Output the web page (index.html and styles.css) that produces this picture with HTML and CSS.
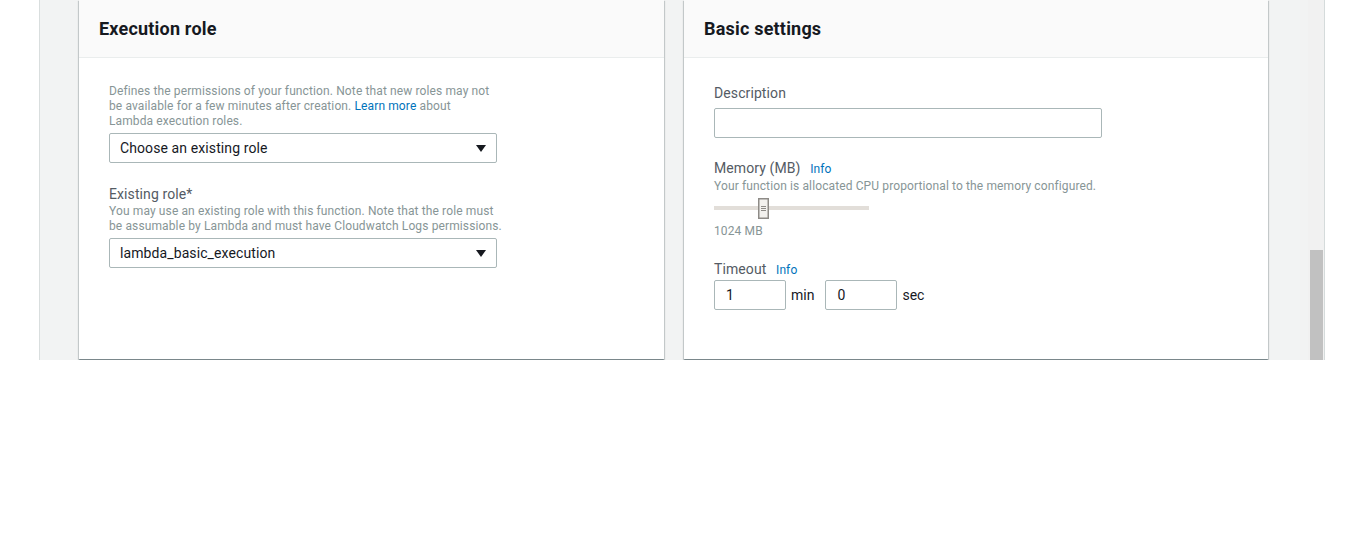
FILE: index.html
```html
<!DOCTYPE html>
<html>
<head>
<meta charset="utf-8">
<link rel="stylesheet" href="styles.css">
</head>
<body>
<div class="stage">
  <div class="content">
    <section class="panel">
      <div class="panel-head"><h2>Execution role</h2></div>
      <div class="panel-body">
        <p class="help first">Defines the permissions of your function. Note that new roles may not<br>be available for a few minutes after creation. <a href="#">Learn more</a> about<br>Lambda execution roles.</p>
        <div class="select"><span>Choose an existing role</span><i class="caret"></i></div>
        <div class="field role">
          <label class="label">Existing role*</label>
          <p class="help">You may use an existing role with this function. Note that the role must<br>be assumable by Lambda and must have Cloudwatch Logs permissions.</p>
          <div class="select"><span>lambda_basic_execution</span><i class="caret"></i></div>
        </div>
      </div>
    </section>
    <section class="panel">
      <div class="panel-head"><h2>Basic settings</h2></div>
      <div class="panel-body">
        <label class="label">Description</label>
        <div class="input wide"></div>
        <div class="field">
          <label class="label">Memory (MB) <a class="info" href="#">Info</a></label>
          <p class="help">Your function is allocated CPU proportional to the memory configured.</p>
          <div class="slider">
            <div class="track"></div>
            <svg class="thumb" width="11" height="21" viewBox="0 0 11 21"><rect x="0.75" y="0.75" width="9.5" height="19.5" fill="#f3f1ee" stroke="#8e8b87" stroke-width="1.5"/><path d="M3 8.5h5M3 10.5h5M3 12.5h5" stroke="#8e8b87" stroke-width="1"/></svg>
          </div>
          <p class="help">1024 MB</p>
        </div>
        <div class="field">
          <label class="label">Timeout <a class="info" href="#">Info</a></label>
          <div class="timeout">
            <div class="input short">1</div><span class="unit">min</span>
            <div class="input short">0</div><span class="unit">sec</span>
          </div>
        </div>
      </div>
    </section>
  </div>
  <div class="scrollbar"><div class="thumb-bar"></div></div>
</div>
</body>
</html>
```
FILE: styles.css
```css
html, body {
  margin: 0;
  padding: 0;
  background: #ffffff;
}
body {
  font-family: Roboto, "Open Sans", sans-serif;
  color: #16191f;
}
.stage {
  margin-left: 39px;
  width: 1284px;
  height: 360px;
  background: #f2f3f3;
  border-left: 1px solid #d9dede;
  border-right: 1px solid #d5dbdb;
  display: flex;
  overflow: hidden;
}
.content {
  flex: 1;
  padding-left: 39px;
  display: grid;
  grid-template-columns: 585px 584px;
  column-gap: 20px;
  align-items: start;
}
.panel {
  background: #ffffff;
  height: 359px;
  box-shadow: 0 1px 1px 0 rgba(0, 28, 36, 0.3), 1px 1px 1px 0 rgba(0, 28, 36, 0.15), -1px 1px 1px 0 rgba(0, 28, 36, 0.15);
}
.panel-head {
  height: 57px;
  background: #fafafa;
  border-bottom: 1px solid #eaeded;
  display: flex;
  align-items: center;
  padding: 0 20px;
}
.panel-head h2 {
  margin: 0;
  font-size: 18px;
  font-weight: 700;
  letter-spacing: 0.2px;
  color: #16191f;
}
.panel-body {
  padding: 25px 30px 0;
}
.help {
  margin: 0;
  font-size: 12px;
  line-height: 15px;
  letter-spacing: 0.12px;
  color: #879596;
}
.help.first {
  margin-top: 1px;
}
a {
  color: #0073bb;
  text-decoration: none;
}
.label {
  display: block;
  font-size: 14px;
  line-height: 20px;
  letter-spacing: 0.1px;
  color: #545b64;
}
.info {
  font-size: 12px;
  letter-spacing: 0.1px;
  margin-left: 6px;
}
.select {
  margin-top: 4px;
  height: 28px;
  border: 1px solid #aab7b8;
  border-radius: 2px;
  display: flex;
  align-items: center;
  justify-content: space-between;
  padding: 0 10px 0 10px;
  box-sizing: content-box;
  width: 366px;
  font-size: 14px;
  letter-spacing: 0.1px;
  color: #16191f;
}
.caret {
  width: 0;
  height: 0;
  border-left: 5px solid transparent;
  border-right: 5px solid transparent;
  border-top: 7px solid #16191f;
}
.field {
  margin-top: 20px;
}
.field.role {
  margin-top: 21px;
}
.input {
  border: 1px solid #aab7b8;
  border-radius: 2px;
  height: 28px;
  font-size: 14px;
  line-height: 28px;
  color: #16191f;
  box-sizing: content-box;
}
.input.wide {
  margin-top: 5px;
  width: 386px;
}
.slider {
  position: relative;
  width: 155px;
  height: 30px;
}
.track {
  position: absolute;
  left: 0;
  right: 0;
  top: 12px;
  height: 4px;
  background: #e2ded9;
}
.thumb {
  position: absolute;
  left: 44px;
  top: 4px;
}
.timeout {
  display: flex;
  align-items: center;
}
.input.short {
  width: 59px;
  padding-left: 11px;
}
.unit {
  font-size: 14px;
  color: #16191f;
  margin: 0 10px 0 5px;
}
.unit:first-of-type {
  margin-right: 11px;
}
.scrollbar {
  width: 16px;
  background: #f1f1f1;
  position: relative;
}
.thumb-bar {
  position: absolute;
  left: 2px;
  width: 13px;
  top: 250px;
  bottom: 0;
  background: #c1c1c1;
}
```
